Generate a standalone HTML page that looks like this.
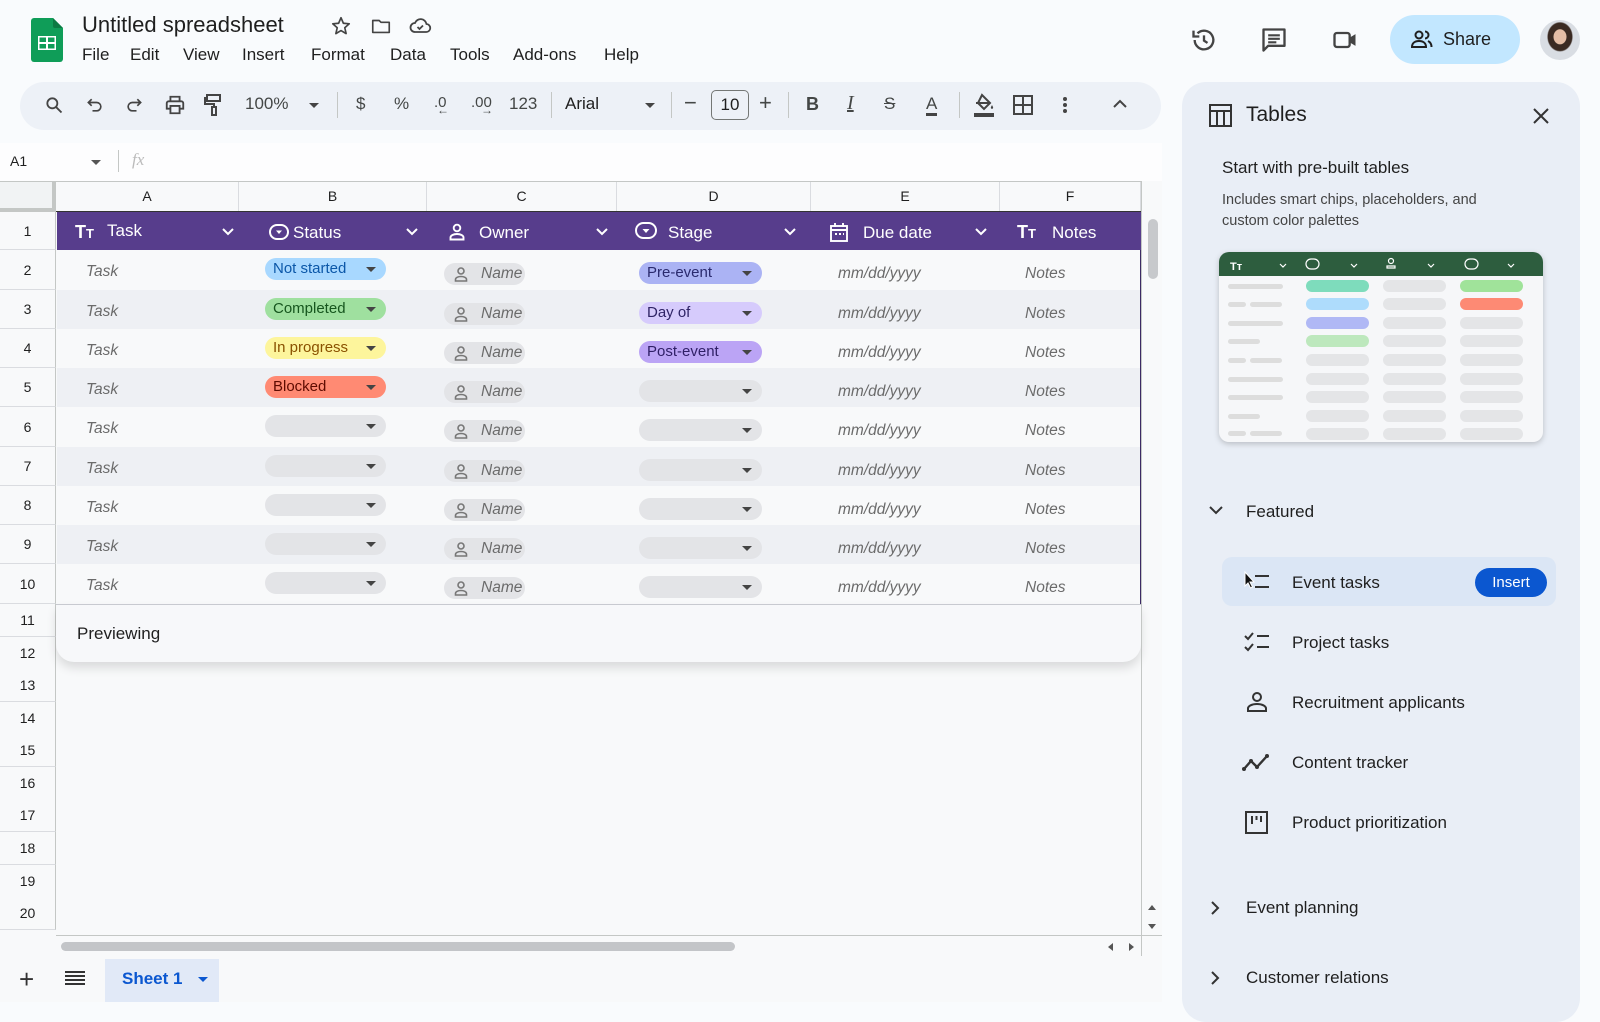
<!DOCTYPE html>
<html><head><meta charset="utf-8"><style>
*{box-sizing:border-box;margin:0;padding:0}
body{width:1600px;height:1002px;overflow:hidden;background:#f9fbfd;font-family:"Liberation Sans",Arial,sans-serif;color:#1f1f1f;position:relative}
.a{position:absolute}
.menu span{position:absolute;top:45px;font-size:17px;color:#1f1f1f}
.tb{position:absolute;top:82px;left:20px;width:1141px;height:48px;border-radius:24px;background:#edf1f7}
.ti{position:absolute;top:94px;font-size:17px;color:#444746}
.sep{position:absolute;top:92px;width:1px;height:26px;background:#c4c7c5}
.ch{position:absolute;top:182px;height:29px;font-size:14px;color:#1f1f1f;text-align:center;line-height:29px;border-right:1px solid #dadce0;background:#f8f9fa}
.rh{position:absolute;left:0;width:56px;text-align:center;font-size:14px;color:#1f1f1f;border-bottom:1px solid #dadce0;background:#f8f9fa;border-right:1px solid #c4c7c5}
.r{position:absolute;left:57px;width:1084px;height:39px;border-right:1.5px solid #3c2a64}
.r.alt{background:#eef0f4}
.r span{position:absolute;font-size:15.5px;font-style:italic;color:#6b6b6b;top:15px}
.r span.t{top:13px}
.chip{position:absolute;height:22px;border-radius:11px;font-size:15px;font-style:normal !important;line-height:22px;padding-left:8px}
.chip:after{content:"";position:absolute;right:10px;top:9px;border-left:5px solid transparent;border-right:5px solid transparent;border-top:5px solid #444}
.st{top:8px}.sg{top:12px}
.own{position:absolute;top:13px;left:387px;width:81px;height:22px;border-radius:11px;background:#e3e4e7}
.own i{position:absolute;left:37px;top:2px;font-size:15.5px;color:#6b6b6b}
.own svg{position:absolute;left:10px;top:3px}
.ph{position:absolute;left:0;width:56px;text-align:center;font-size:14px;border-bottom:1px solid #dadce0;height:33px;line-height:33px;background:#f8f9fa;border-right:1px solid #c4c7c5}
.hd{position:absolute;color:#fff;font-size:17px;top:223px}
.item{position:absolute;left:1292px;font-size:17px;color:#1f1f1f}
</style></head><body>
<svg class="a" style="left:31px;top:18px" width="32" height="44" viewBox="0 0 32 44"><path d="M3 0h19l10 10v31a3 3 0 0 1-3 3H3a3 3 0 0 1-3-3V3a3 3 0 0 1 3-3z" fill="#0f9d58"/><path d="M22 0l10 10H24a2 2 0 0 1-2-2z" fill="#0b7a43"/><rect x="7" y="18" width="18" height="14" fill="#fff"/><path d="M8.5 19.5h6.5v4.5H8.5zM17 19.5h6.5v4.5H17zM8.5 26h6.5v4.5H8.5zM17 26h6.5v4.5H17z" fill="#0f9d58"/></svg>
<div class="a" style="left:82px;top:12px;font-size:22px;color:#1f1f1f">Untitled spreadsheet</div>
<svg class="a" style="left:330px;top:15px" width="22" height="22" viewBox="0 0 24 24"><path d="M12 3l2.6 6 6.4.6-4.9 4.3 1.5 6.4L12 17l-5.6 3.3 1.5-6.4L3 9.6l6.4-.6z" fill="none" stroke="#444" stroke-width="1.8" stroke-linejoin="round"/></svg>
<svg class="a" style="left:370px;top:15px" width="22" height="22" viewBox="0 0 24 24"><path d="M3 6h7l2 2h9v11H3z" fill="none" stroke="#444" stroke-width="1.8" stroke-linejoin="round"/></svg>
<svg class="a" style="left:408px;top:14px" width="24" height="24" viewBox="0 0 24 24"><path d="M7 18h11a4 4 0 0 0 .5-8A6 6 0 0 0 7 9a4.5 4.5 0 0 0 0 9z" fill="none" stroke="#444" stroke-width="1.8"/><path d="M9.5 13l2 2 3.5-3.5" fill="none" stroke="#444" stroke-width="1.8"/></svg>
<div class="menu"><span style="left:82px">File</span><span style="left:130px">Edit</span><span style="left:183px">View</span><span style="left:242px">Insert</span><span style="left:311px">Format</span><span style="left:390px">Data</span><span style="left:450px">Tools</span><span style="left:513px">Add-ons</span><span style="left:604px">Help</span></div>
<svg class="a" style="left:1190px;top:26px" width="28" height="28" viewBox="0 0 24 24"><path d="M4 12a8 8 0 1 0 2.4-5.7" fill="none" stroke="#444" stroke-width="2"/><path d="M3 4v5h5" fill="none" stroke="#444" stroke-width="2"/><path d="M12 8v4.5l3 2" fill="none" stroke="#444" stroke-width="2"/></svg>
<svg class="a" style="left:1260px;top:26px" width="28" height="28" viewBox="0 0 24 24"><path d="M3 3h18v14H7l-4 4z" fill="none" stroke="#444" stroke-width="2" stroke-linejoin="round"/><path d="M7 8h10M7 11h10M7 14h7" stroke="#444" stroke-width="1.8"/></svg>
<svg class="a" style="left:1331px;top:26px" width="28" height="28" viewBox="0 0 24 24"><rect x="3" y="6" width="13" height="12" rx="2" fill="none" stroke="#444" stroke-width="2"/><path d="M16 10l5-3v10l-5-3z" fill="#444"/></svg>
<div class="a" style="left:1390px;top:15px;width:130px;height:49px;border-radius:25px;background:#c2e7ff"></div>
<svg class="a" style="left:1410px;top:28px" width="24" height="22" viewBox="0 0 24 22"><circle cx="9" cy="7" r="3.5" fill="none" stroke="#1f1f1f" stroke-width="2"/><path d="M2 19c0-4 3-6 7-6s7 2 7 6z" fill="none" stroke="#1f1f1f" stroke-width="2"/><path d="M15 3.5a3.5 3.5 0 0 1 0 7M18 13c2 1 3.5 3 3.5 6" fill="none" stroke="#1f1f1f" stroke-width="2"/></svg>
<div class="a" style="left:1443px;top:29px;font-size:18px;color:#1f1f1f">Share</div>
<div class="a" style="left:1540px;top:20px;width:40px;height:40px;border-radius:50%;background:radial-gradient(ellipse at 50% 42%,#e4bda5 0 22%,#3a2a22 24% 42%,#d9dde3 46%)"></div>
<div class="tb"></div>
<svg class="a" style="left:44px;top:95px" width="20" height="20" viewBox="0 0 24 24"><circle cx="10" cy="10" r="6" fill="none" stroke="#444" stroke-width="2.2"/><path d="M14.5 14.5L21 21" stroke="#444" stroke-width="2.2"/></svg>
<svg class="a" style="left:85px;top:95px" width="20" height="20" viewBox="0 0 24 24"><path d="M8 5L4 9l4 4M4 9h10a5 5 0 0 1 0 10H9" fill="none" stroke="#444" stroke-width="2"/></svg>
<svg class="a" style="left:124px;top:95px" width="20" height="20" viewBox="0 0 24 24"><path d="M16 5l4 4-4 4M20 9H10a5 5 0 0 0 0 10h5" fill="none" stroke="#444" stroke-width="2"/></svg>
<svg class="a" style="left:164px;top:94px" width="22" height="22" viewBox="0 0 24 24"><path d="M7 8V3h10v5M5 8h14a2 2 0 0 1 2 2v6h-4M7 16H3v-6a2 2 0 0 1 2-2M7 13h10v8H7z" fill="none" stroke="#444" stroke-width="2"/></svg>
<svg class="a" style="left:204px;top:93px" width="20" height="24" viewBox="0 0 20 24"><rect x="3" y="2" width="13" height="6" fill="none" stroke="#444" stroke-width="2"/><path d="M3 5H1v6h9v3" fill="none" stroke="#444" stroke-width="2"/><rect x="8" y="14" width="4" height="8" fill="none" stroke="#444" stroke-width="2"/></svg>
<div class="ti" style="left:245px">100%</div>
<div class="a" style="left:309px;top:103px;border-left:5px solid transparent;border-right:5px solid transparent;border-top:5px solid #444"></div>
<div class="sep" style="left:337px"></div>
<div class="ti" style="left:356px">$</div>
<div class="ti" style="left:394px">%</div>
<div class="ti" style="left:434px;font-size:15px">.0<span style="position:absolute;left:3px;top:9px;font-size:12px">←</span></div>
<div class="ti" style="left:471px;font-size:15px">.00<span style="position:absolute;left:10px;top:9px;font-size:12px">→</span></div>
<div class="ti" style="left:509px">123</div>
<div class="sep" style="left:551px"></div>
<div class="ti" style="left:565px;color:#1f1f1f">Arial</div>
<div class="a" style="left:645px;top:103px;border-left:5px solid transparent;border-right:5px solid transparent;border-top:5px solid #444"></div>
<div class="sep" style="left:671px"></div>
<div class="ti" style="left:684px;font-size:22px;top:90px">−</div>
<div class="a" style="left:711px;top:90px;width:38px;height:30px;border:1px solid #747775;border-radius:5px;font-size:17px;text-align:center;line-height:28px">10</div>
<div class="ti" style="left:759px;font-size:22px;top:90px">+</div>
<div class="sep" style="left:788px"></div>
<div class="ti" style="left:806px;font-weight:bold;font-size:18px">B</div>
<div class="ti" style="left:847px;font-style:italic;font-family:'Liberation Serif',serif;font-size:20px;top:92px;text-decoration:underline">I</div>
<div class="ti" style="left:884px;text-decoration:line-through">S</div>
<div class="ti" style="left:926px;border-bottom:3px solid #444;line-height:19px">A</div>
<div class="sep" style="left:959px"></div>
<svg class="a" style="left:973px;top:93px" width="22" height="24" viewBox="0 0 22 24"><path d="M9 2l8 8-6 6-6-6zM3 10h14" fill="none" stroke="#444" stroke-width="2"/><path d="M19 12c1 2 2 3 0 4-2-1-1-2 0-4z" fill="#444"/><rect x="1" y="20" width="20" height="4" fill="#444"/></svg>
<svg class="a" style="left:1013px;top:95px" width="20" height="20" viewBox="0 0 20 20"><path d="M1 1h18v18H1zM10 1v18M1 10h18" fill="none" stroke="#444" stroke-width="2"/></svg>
<svg class="a" style="left:1060px;top:95px" width="10" height="20"><circle cx="5" cy="4" r="2" fill="#444"/><circle cx="5" cy="10" r="2" fill="#444"/><circle cx="5" cy="16" r="2" fill="#444"/></svg>
<svg class="a" style="left:1112px;top:98px" width="16" height="12"><path d="M2 9l6-6 6 6" fill="none" stroke="#444" stroke-width="2"/></svg>
<div class="a" style="left:0;top:143px;width:1162px;height:38px;background:#fdfdfe"></div>
<div class="a" style="left:10px;top:153px;font-size:14px">A1</div>
<div class="a" style="left:91px;top:160px;border-left:5px solid transparent;border-right:5px solid transparent;border-top:5px solid #555"></div>
<div class="a" style="left:118px;top:150px;width:1px;height:22px;background:#c4c7c5"></div>
<div class="a" style="left:132px;top:150px;font-size:17px;font-style:italic;color:#bbb;font-family:'Liberation Serif',serif">fx</div>
<div class="a" style="left:0;top:181px;width:1162px;height:775px;background:#f8f9fa"></div>
<div class="a" style="left:0;top:181px;width:1141px;height:1px;background:#c4c7c5"></div>
<div class="a" style="left:0;top:182px;width:56px;height:30px;background:#f1f3f4;border-right:4px solid #c4c7c5;border-bottom:4px solid #c4c7c5"></div>
<div class="ch" style="left:56px;width:183px">A</div>
<div class="ch" style="left:239px;width:188px">B</div>
<div class="ch" style="left:427px;width:190px">C</div>
<div class="ch" style="left:617px;width:194px">D</div>
<div class="ch" style="left:811px;width:189px">E</div>
<div class="ch" style="left:1000px;width:141px">F</div>
<div class="a" style="left:56px;top:211px;width:1085px;height:1px;background:#333"></div>
<div class="rh" style="top:212px;height:38px;line-height:38px">1</div>
<div class="rh" style="top:250px;height:40px;line-height:40px">2</div>
<div class="rh" style="top:290px;height:39px;line-height:39px">3</div>
<div class="rh" style="top:329px;height:39px;line-height:39px">4</div>
<div class="rh" style="top:368px;height:39px;line-height:39px">5</div>
<div class="rh" style="top:407px;height:40px;line-height:40px">6</div>
<div class="rh" style="top:447px;height:39px;line-height:39px">7</div>
<div class="rh" style="top:486px;height:39px;line-height:39px">8</div>
<div class="rh" style="top:525px;height:39px;line-height:39px">9</div>
<div class="rh" style="top:564px;height:40px;line-height:40px">10</div>
<div class="ph" style="top:604px">11</div><div class="ph" style="top:637px">12</div><div class="ph" style="top:669px">13</div><div class="ph" style="top:702px">14</div><div class="ph" style="top:734px">15</div><div class="ph" style="top:767px">16</div><div class="ph" style="top:799px">17</div><div class="ph" style="top:832px">18</div><div class="ph" style="top:865px">19</div><div class="ph" style="top:897px">20</div>
<div class="a" style="left:57px;top:212px;width:1084px;height:38px;background:#573d8c"></div>
<div class="hd" style="left:75px;font-weight:bold;font-size:18px;top:222px">T<span style="font-size:13px">T</span></div><div class="hd" style="left:107px;top:221px">Task</div>
<div class="hd" style="left:269px;top:224px"><svg width="20" height="16" viewBox="0 0 20 16"><rect x="1" y="1" width="18" height="14" rx="7" fill="none" stroke="#fff" stroke-width="2"/><path d="M7 6.5l3 3.5 3-3.5z" fill="#fff"/></svg></div><div class="hd" style="left:293px">Status</div>
<div class="hd" style="left:449px"><svg width="16" height="18" viewBox="0 0 16 18"><circle cx="8" cy="5" r="3.3" fill="none" stroke="#fff" stroke-width="1.9"/><path d="M1.5 16.5v-2c0-2 3-3.5 6.5-3.5s6.5 1.5 6.5 3.5v2z" fill="none" stroke="#fff" stroke-width="1.9"/></svg></div><div class="hd" style="left:479px">Owner</div>
<div class="hd" style="left:635px;top:222px"><svg width="22" height="18" viewBox="0 0 22 18"><rect x="1" y="1" width="20" height="15" rx="7.5" fill="none" stroke="#fff" stroke-width="2"/><path d="M7.5 7l3.5 4 3.5-4z" fill="#fff"/></svg></div><div class="hd" style="left:668px">Stage</div>
<div class="hd" style="left:830px"><svg width="18" height="19" viewBox="0 0 18 19"><rect x="1" y="3" width="16" height="15" fill="none" stroke="#fff" stroke-width="1.9"/><path d="M1 7h16M5 0v4M13 0v4M5 11h2M9 11h2M13 11h1" stroke="#fff" stroke-width="1.9"/></svg></div><div class="hd" style="left:863px">Due date</div>
<div class="hd" style="left:1017px;font-weight:bold;font-size:18px;top:222px">T<span style="font-size:13px">T</span></div><div class="hd" style="left:1052px">Notes</div>
<svg class="a" style="left:221px;top:227px" width="14" height="10"><path d="M2 2l5 5 5-5" fill="none" stroke="#fff" stroke-width="2"/></svg>
<svg class="a" style="left:405px;top:227px" width="14" height="10"><path d="M2 2l5 5 5-5" fill="none" stroke="#fff" stroke-width="2"/></svg>
<svg class="a" style="left:595px;top:227px" width="14" height="10"><path d="M2 2l5 5 5-5" fill="none" stroke="#fff" stroke-width="2"/></svg>
<svg class="a" style="left:783px;top:227px" width="14" height="10"><path d="M2 2l5 5 5-5" fill="none" stroke="#fff" stroke-width="2"/></svg>
<svg class="a" style="left:974px;top:227px" width="14" height="10"><path d="M2 2l5 5 5-5" fill="none" stroke="#fff" stroke-width="2"/></svg>
<svg width="0" height="0" style="position:absolute"><defs><g id="p"><circle cx="7" cy="5" r="3" fill="none" stroke="#777" stroke-width="1.6"/><path d="M1.5 15v-1.5c0-1.8 2.5-3 5.5-3s5.5 1.2 5.5 3V15z" fill="none" stroke="#777" stroke-width="1.6"/></g></defs></svg>
<div class="r" style="top:250px;height:40px"><span class="t" style="left:29px">Task</span><div class="chip st" style="left:208px;width:121px;background:#a8d8ff;color:#0b57a8">Not started</div><div class="own"><svg width="14" height="16"><use href="#p"/></svg><i>Name</i></div><div class="chip sg" style="left:582px;width:123px;background:#abb3f4;color:#2a2a6e">Pre-event</div><span style="left:781px">mm/dd/yyyy</span><span style="left:968px">Notes</span></div>
<div class="r alt" style="top:290px"><span class="t" style="left:29px">Task</span><div class="chip st" style="left:208px;width:121px;background:#9fe09f;color:#16561e">Completed</div><div class="own"><svg width="14" height="16"><use href="#p"/></svg><i>Name</i></div><div class="chip sg" style="left:582px;width:123px;background:#d6cbfc;color:#2f2466">Day of</div><span style="left:781px">mm/dd/yyyy</span><span style="left:968px">Notes</span></div>
<div class="r" style="top:329px"><span class="t" style="left:29px">Task</span><div class="chip st" style="left:208px;width:121px;background:#fdf59c;color:#8a5100">In progress</div><div class="own"><svg width="14" height="16"><use href="#p"/></svg><i>Name</i></div><div class="chip sg" style="left:582px;width:123px;background:#bba4f5;color:#2f1f66">Post-event</div><span style="left:781px">mm/dd/yyyy</span><span style="left:968px">Notes</span></div>
<div class="r alt" style="top:368px"><span class="t" style="left:29px">Task</span><div class="chip st" style="left:208px;width:121px;background:#ff8a73;color:#5e0b00">Blocked</div><div class="own"><svg width="14" height="16"><use href="#p"/></svg><i>Name</i></div><div class="chip sg" style="left:582px;width:123px;background:#e3e4e7"></div><span style="left:781px">mm/dd/yyyy</span><span style="left:968px">Notes</span></div>
<div class="r" style="top:407px;height:40px"><span class="t" style="left:29px">Task</span><div class="chip st" style="left:208px;width:121px;background:#e3e4e7"></div><div class="own"><svg width="14" height="16"><use href="#p"/></svg><i>Name</i></div><div class="chip sg" style="left:582px;width:123px;background:#e3e4e7"></div><span style="left:781px">mm/dd/yyyy</span><span style="left:968px">Notes</span></div>
<div class="r alt" style="top:447px"><span class="t" style="left:29px">Task</span><div class="chip st" style="left:208px;width:121px;background:#e3e4e7"></div><div class="own"><svg width="14" height="16"><use href="#p"/></svg><i>Name</i></div><div class="chip sg" style="left:582px;width:123px;background:#e3e4e7"></div><span style="left:781px">mm/dd/yyyy</span><span style="left:968px">Notes</span></div>
<div class="r" style="top:486px"><span class="t" style="left:29px">Task</span><div class="chip st" style="left:208px;width:121px;background:#e3e4e7"></div><div class="own"><svg width="14" height="16"><use href="#p"/></svg><i>Name</i></div><div class="chip sg" style="left:582px;width:123px;background:#e3e4e7"></div><span style="left:781px">mm/dd/yyyy</span><span style="left:968px">Notes</span></div>
<div class="r alt" style="top:525px"><span class="t" style="left:29px">Task</span><div class="chip st" style="left:208px;width:121px;background:#e3e4e7"></div><div class="own"><svg width="14" height="16"><use href="#p"/></svg><i>Name</i></div><div class="chip sg" style="left:582px;width:123px;background:#e3e4e7"></div><span style="left:781px">mm/dd/yyyy</span><span style="left:968px">Notes</span></div>
<div class="r" style="top:564px;height:40px"><span class="t" style="left:29px">Task</span><div class="chip st" style="left:208px;width:121px;background:#e3e4e7"></div><div class="own"><svg width="14" height="16"><use href="#p"/></svg><i>Name</i></div><div class="chip sg" style="left:582px;width:123px;background:#e3e4e7"></div><span style="left:781px">mm/dd/yyyy</span><span style="left:968px">Notes</span></div>
<div class="a" style="left:56px;top:604px;width:1085px;height:58px;background:#f7f8fa;border-radius:0 0 18px 18px;box-shadow:0 6px 10px rgba(0,0,0,.12);border-top:1px solid #c8cad0"></div>
<div class="a" style="left:77px;top:624px;font-size:17px;color:#1f1f1f">Previewing</div>
<div class="a" style="left:1141px;top:181px;width:1px;height:775px;background:#c4c7c5"></div>
<div class="a" style="left:1148px;top:219px;width:10px;height:60px;border-radius:5px;background:#c7c9cc"></div>
<div class="a" style="left:1148px;top:905px;border-left:4px solid transparent;border-right:4px solid transparent;border-bottom:5px solid #555"></div>
<div class="a" style="left:1148px;top:924px;border-left:4px solid transparent;border-right:4px solid transparent;border-top:5px solid #555"></div>
<div class="a" style="left:56px;top:935px;width:1106px;height:1px;background:#c4c7c5"></div>
<div class="a" style="left:61px;top:942px;width:674px;height:9px;border-radius:5px;background:#c3c5c8"></div>
<div class="a" style="left:1108px;top:943px;border-top:4px solid transparent;border-bottom:4px solid transparent;border-right:5px solid #555"></div>
<div class="a" style="left:1129px;top:943px;border-top:4px solid transparent;border-bottom:4px solid transparent;border-left:5px solid #555"></div>
<div class="a" style="left:0;top:956px;width:1162px;height:46px;background:#f8f9fa"></div>
<div class="a" style="left:19px;top:964px;font-size:26px;color:#333">+</div>
<svg class="a" style="left:65px;top:970px" width="20" height="16"><path d="M0 2h20M0 6h20M0 10h20M0 14h20" stroke="#333" stroke-width="2"/></svg>
<div class="a" style="left:105px;top:959px;width:114px;height:43px;background:#e1e9f7"></div>
<div class="a" style="left:122px;top:969px;font-size:17px;color:#0b57d0;font-weight:bold">Sheet 1</div>
<div class="a" style="left:198px;top:977px;border-left:5px solid transparent;border-right:5px solid transparent;border-top:5px solid #0b57d0"></div>
<div class="a" style="left:1182px;top:82px;width:398px;height:940px;border-radius:24px;background:#e9eef6"></div>
<svg class="a" style="left:1209px;top:104px" width="23" height="23" viewBox="0 0 23 23"><rect x="1" y="1" width="21" height="21" fill="none" stroke="#333" stroke-width="2"/><path d="M1 7h21M8 7v15M15 7v15" stroke="#333" stroke-width="2"/></svg>
<div class="a" style="left:1246px;top:103px;font-size:21px;color:#1f1f1f">Tables</div>
<svg class="a" style="left:1532px;top:107px" width="18" height="18"><path d="M2 2l14 14M16 2L2 16" stroke="#333" stroke-width="2"/></svg>
<div class="a" style="left:1222px;top:158px;font-size:17px;color:#1f1f1f">Start with pre-built tables</div>
<div class="a" style="left:1222px;top:190px;font-size:14.5px;color:#444;line-height:21px">Includes smart chips, placeholders, and<br>custom color palettes</div>
<svg class="a" style="left:1218px;top:251px;filter:drop-shadow(0 2px 3px rgba(0,0,0,.2))" width="326" height="194" viewBox="0 0 326 194">
<rect x="1" y="1" width="324" height="190" rx="10" fill="#f6f7f9"/>
<path d="M1 11a10 10 0 0 1 10-10h304a10 10 0 0 1 10 10v14H1z" fill="#2d5d3e"/>
<text x="12" y="19" font-size="11" font-weight="bold" fill="#fff" font-family="Liberation Sans">Tт</text>
<g fill="none" stroke="#fff" stroke-width="1.2"><path d="M62 13l3 3 3-3M210 13l3 3 3-3M290 13l3 3 3-3M133 13l3 3 3-3"/><rect x="88" y="8" width="13" height="10" rx="5"/><rect x="247" y="8" width="13" height="10" rx="5"/><circle cx="173" cy="10" r="2.5"/><path d="M169 17h8v-2h-8z"/></g>
<rect x="10" y="33" width="55" height="5" rx="2.5" fill="#ddd"/><rect x="88" y="29" width="63" height="12" rx="6" fill="#7edcbc"/><rect x="165" y="29" width="63" height="12" rx="6" fill="#e4e5e7"/><rect x="242" y="29" width="63" height="12" rx="6" fill="#a0e39a"/>
<rect x="10" y="51" width="18" height="5" rx="2.5" fill="#ddd"/><rect x="32" y="51" width="32" height="5" rx="2.5" fill="#ddd"/><rect x="88" y="47" width="63" height="12" rx="6" fill="#aedcfc"/><rect x="165" y="47" width="63" height="12" rx="6" fill="#e4e5e7"/><rect x="242" y="47" width="63" height="12" rx="6" fill="#fd8a74"/>
<rect x="10" y="70" width="55" height="5" rx="2.5" fill="#ddd"/><rect x="88" y="66" width="63" height="12" rx="6" fill="#b0b8f5"/><rect x="165" y="66" width="63" height="12" rx="6" fill="#e4e5e7"/><rect x="242" y="66" width="63" height="12" rx="6" fill="#e4e5e7"/>
<rect x="10" y="88" width="32" height="5" rx="2.5" fill="#ddd"/><rect x="88" y="84" width="63" height="12" rx="6" fill="#bde8bd"/><rect x="165" y="84" width="63" height="12" rx="6" fill="#e4e5e7"/><rect x="242" y="84" width="63" height="12" rx="6" fill="#e4e5e7"/>
<rect x="10" y="107" width="18" height="5" rx="2.5" fill="#ddd"/><rect x="32" y="107" width="32" height="5" rx="2.5" fill="#ddd"/><rect x="88" y="103" width="63" height="12" rx="6" fill="#e4e5e7"/><rect x="165" y="103" width="63" height="12" rx="6" fill="#e4e5e7"/><rect x="242" y="103" width="63" height="12" rx="6" fill="#e4e5e7"/>
<rect x="10" y="126" width="55" height="5" rx="2.5" fill="#ddd"/><rect x="88" y="122" width="63" height="12" rx="6" fill="#e4e5e7"/><rect x="165" y="122" width="63" height="12" rx="6" fill="#e4e5e7"/><rect x="242" y="122" width="63" height="12" rx="6" fill="#e4e5e7"/>
<rect x="10" y="144" width="55" height="5" rx="2.5" fill="#ddd"/><rect x="88" y="140" width="63" height="12" rx="6" fill="#e4e5e7"/><rect x="165" y="140" width="63" height="12" rx="6" fill="#e4e5e7"/><rect x="242" y="140" width="63" height="12" rx="6" fill="#e4e5e7"/>
<rect x="10" y="163" width="32" height="5" rx="2.5" fill="#ddd"/><rect x="88" y="159" width="63" height="12" rx="6" fill="#e4e5e7"/><rect x="165" y="159" width="63" height="12" rx="6" fill="#e4e5e7"/><rect x="242" y="159" width="63" height="12" rx="6" fill="#e4e5e7"/>
<rect x="10" y="180" width="18" height="5" rx="2.5" fill="#ddd"/><rect x="32" y="180" width="32" height="5" rx="2.5" fill="#ddd"/><rect x="88" y="177" width="63" height="12" rx="6" fill="#e4e5e7"/><rect x="165" y="177" width="63" height="12" rx="6" fill="#e4e5e7"/><rect x="242" y="177" width="63" height="12" rx="6" fill="#e4e5e7"/>
</svg>
<svg class="a" style="left:1208px;top:505px" width="16" height="12"><path d="M2 2l6 6 6-6" fill="none" stroke="#333" stroke-width="2"/></svg>
<div class="a" style="left:1246px;top:502px;font-size:17px">Featured</div>
<div class="a" style="left:1222px;top:557px;width:334px;height:49px;border-radius:10px;background:#dbe6f5"></div>
<div class="a" style="left:1475px;top:568px;width:72px;height:29px;border-radius:15px;background:#0b57d0;color:#fff;font-size:15px;text-align:center;line-height:29px">Insert</div>
<svg class="a" style="left:1243px;top:571px" width="28" height="22" viewBox="0 0 28 22"><path d="M12 5h14M12 16h14" stroke="#333" stroke-width="2"/><path d="M2 1v14l3-3 2.5 5 2-1-2.5-5h4z" fill="#111" stroke="#fff" stroke-width="1"/></svg>
<div class="item" style="top:573px">Event tasks</div>
<svg class="a" style="left:1243px;top:631px" width="28" height="22" viewBox="0 0 28 22"><path d="M2 5l3 3 5-6M2 16l3 3 5-6" fill="none" stroke="#333" stroke-width="2"/><path d="M14 5h12M14 16h12" stroke="#333" stroke-width="2"/></svg>
<div class="item" style="top:633px">Project tasks</div>
<svg class="a" style="left:1246px;top:691px" width="22" height="22" viewBox="0 0 22 22"><circle cx="11" cy="6" r="4" fill="none" stroke="#333" stroke-width="2"/><path d="M2 20v-2.5c0-2.5 4-4.5 9-4.5s9 2 9 4.5V20z" fill="none" stroke="#333" stroke-width="2"/></svg>
<div class="item" style="top:693px">Recruitment applicants</div>
<svg class="a" style="left:1242px;top:752px" width="28" height="20" viewBox="0 0 28 20"><path d="M2 17l7-8 6 6 10-11" fill="none" stroke="#333" stroke-width="2.4" stroke-linejoin="round"/><circle cx="9" cy="9" r="2" fill="#333"/><circle cx="15" cy="15" r="2" fill="#333"/><circle cx="25" cy="4" r="2" fill="#333"/><circle cx="2" cy="17" r="2" fill="#333"/></svg>
<div class="item" style="top:753px">Content tracker</div>
<svg class="a" style="left:1245px;top:811px" width="23" height="23" viewBox="0 0 23 23"><rect x="1" y="1" width="21" height="21" fill="none" stroke="#333" stroke-width="2"/><path d="M7 5v8M11.5 5v4M16 5v6" stroke="#333" stroke-width="2"/></svg>
<div class="item" style="top:813px">Product prioritization</div>
<svg class="a" style="left:1210px;top:900px" width="12" height="16"><path d="M2 2l6 6-6 6" fill="none" stroke="#333" stroke-width="2"/></svg>
<div class="a" style="left:1246px;top:898px;font-size:17px">Event planning</div>
<svg class="a" style="left:1210px;top:970px" width="12" height="16"><path d="M2 2l6 6-6 6" fill="none" stroke="#333" stroke-width="2"/></svg>
<div class="a" style="left:1246px;top:968px;font-size:17px">Customer relations</div>
</body></html>
